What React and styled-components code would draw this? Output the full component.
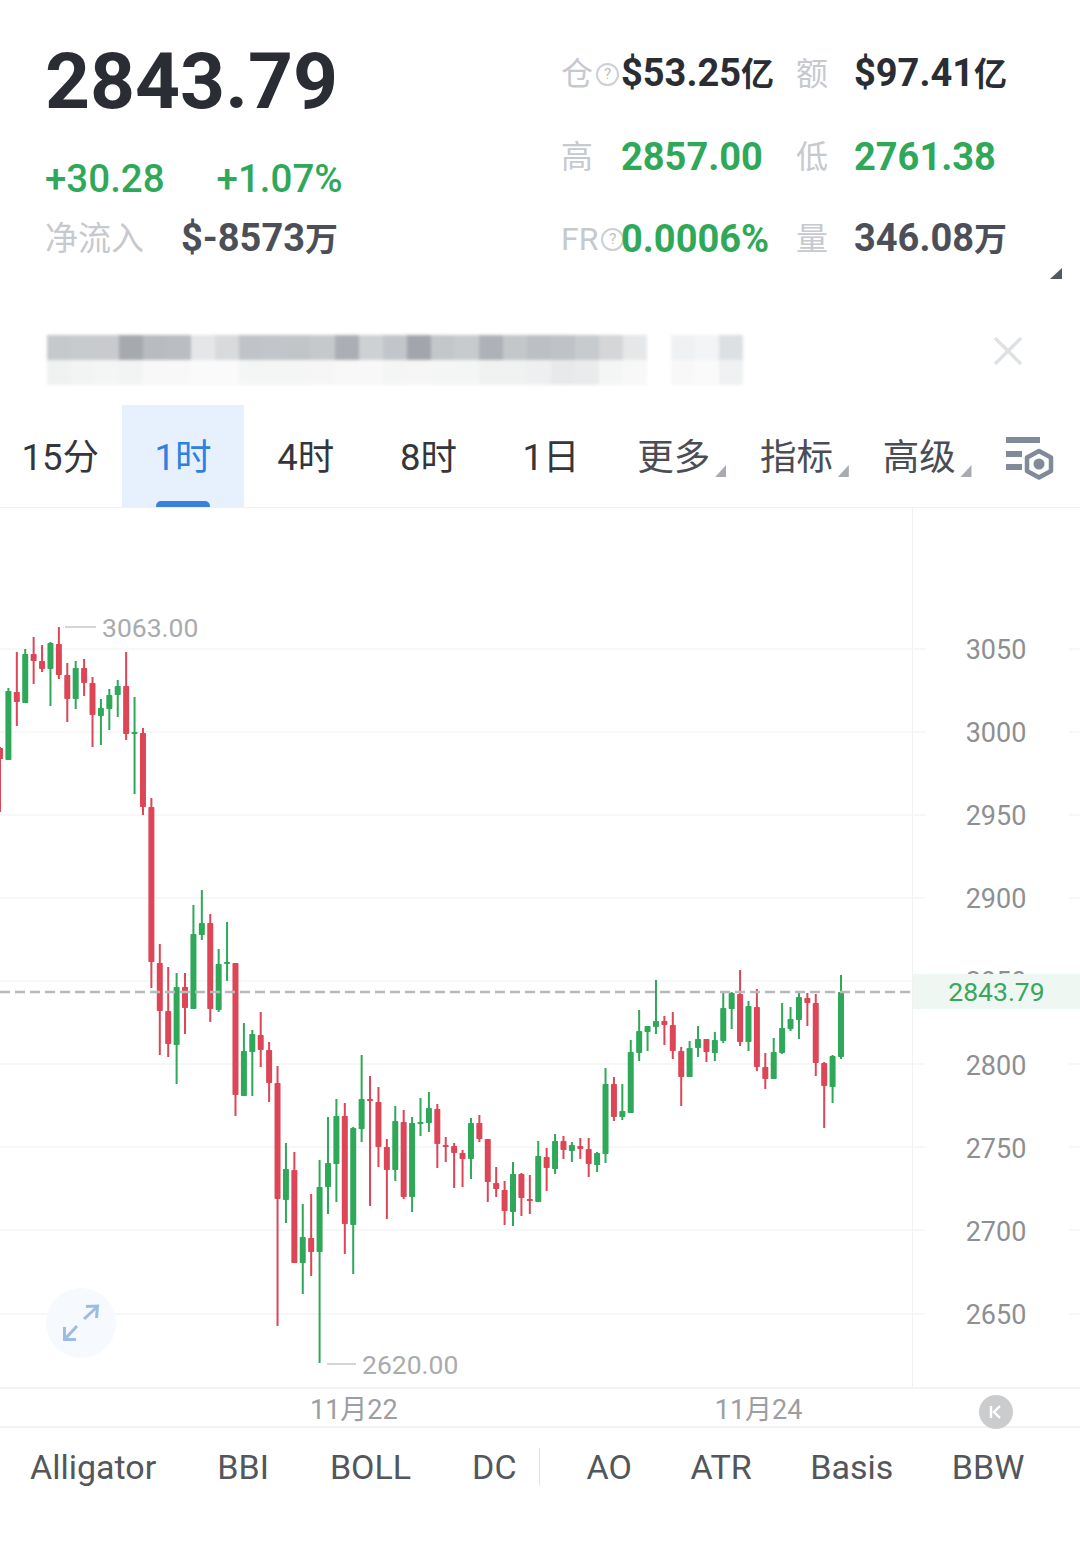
import React from "react";
import styled, { createGlobalStyle } from "styled-components";

const GlobalStyle = createGlobalStyle`
    html, body {
        margin: 0;
        padding: 0;
        background: white;
    }
    * {
        box-sizing: border-box;
    }
`;

const green = "#2fa85a";
const red = "#dc4657";
const stack = `Roboto, "Noto Sans CJK SC", sans-serif`;

const Page = styled.div`
    position: relative;
    width: 1080px;
    height: 1561px;
    overflow: hidden;
    background: white;
    font-family: ${stack};
`;

/* header */
const Header = styled.div`
    position: relative;
    display: flex;
    height: 300px;
`;

const LeftCol = styled.div`
    flex: 0 0 562px;
    padding: 41px 0 0 45px;
`;

const Price = styled.div`
    font-size: 78.5px;
    line-height: 80px;
    font-weight: 700;
    color: #2a2d33;
`;

const ChangeRow = styled.div`
    display: flex;
    gap: 52px;
    margin-top: 38px;
    font-size: 38.5px;
    line-height: 40px;
    font-weight: 500;
    color: ${green};
`;

const FlowRow = styled.div`
    display: flex;
    align-items: center;
    gap: 37px;
    margin-top: 20px;
    height: 40px;
`;

const FlowLabel = styled.span`
    font-size: 33px;
    line-height: 40px;
    color: #c6c9cd;
`;

const StatGrid = styled.div`
    display: grid;
    grid-template-columns: 59px 176px 57px auto;
    grid-auto-rows: 82.5px;
    padding-top: 33px;
    align-items: center;
`;

const StatLabel = styled.span`
    display: flex;
    align-items: center;
    margin-left: -1px;
    white-space: nowrap;
    font-size: 32px;
    line-height: 40px;
    color: #c6c9cd;
`;

const StatValue = styled.span`
    white-space: nowrap;
    font-size: 38px;
    line-height: 40px;
    font-weight: 700;
    color: ${(p) => p.$color || "#2a2d33"};
`;

const Unit = styled.span`
    font-size: 33px;
`;

const Help = styled.span`
    flex: none;
    display: inline-flex;
    align-items: center;
    justify-content: center;
    width: 23px;
    height: 23px;
    margin-left: 3px;
    border: 2px solid #ccd0d4;
    border-radius: 50%;
    font-size: 15px;
    line-height: 15px;
    color: #bcc0c5;
`;

const CornerMark = styled.div`
    position: absolute;
    right: 18px;
    top: 268px;
    width: 12px;
    height: 11px;
    background: #555a60;
    clip-path: polygon(100% 0, 100% 100%, 0 100%);
`;

/* blurred notice */
const Notice = styled.div`
    display: flex;
    height: 105px;
    padding: 35px 57px 20px 47px;
`;

const BlurStrip = styled.div`
    display: flex;
    flex-direction: column;
    filter: blur(1.5px);
`;

const BlurRow = styled.div`
    display: flex;
    height: 25px;
`;

const BlurCell = styled.div`
    width: 24px;
    height: 25px;
    background: ${(p) => p.$shade};
`;

const CloseIcon = styled.svg`
    margin-left: auto;
    margin-top: 1px;
    width: 30px;
    height: 30px;
`;

/* time frame tabs */
const Tabs = styled.div`
    display: flex;
    height: 103px;
    margin-left: -1px;
    border-bottom: 1px solid #f0f1f3;
`;

const Tab = styled.div`
    position: relative;
    flex: 0 0 122.7px;
    display: flex;
    align-items: center;
    justify-content: center;
    padding-top: 4px;
    font-size: 36.5px;
    line-height: 44px;
    color: ${(p) => (p.$active ? "#2f80e0" : p.$menu ? "#4a4e54" : "#33363b")};
    background: ${(p) => (p.$active ? "#e6f1fd" : "transparent")};
`;

const ActiveBar = styled.div`
    position: absolute;
    left: 34px;
    bottom: 0;
    width: 54px;
    height: 6px;
    border-radius: 5px 5px 0 0;
    background: #3a80e0;
`;

const Caret = styled.div`
    position: absolute;
    right: 9px;
    top: 60px;
    width: 11px;
    height: 12px;
    background: #a8abaf;
    clip-path: polygon(100% 0, 100% 100%, 0 100%);
`;

const SettingsIcon = styled.svg`
    flex: none;
    margin: 31px 0 0 23px;
    width: 52px;
    height: 44px;
`;

/* chart */
const Chart = styled.div`
    display: flex;
    height: 881px;
    border-bottom: 2px solid #f2f3f4;
`;

const Plot = styled.div`
    position: relative;
    flex: 0 0 913px;
    border-right: 1px solid #f0f1f3;
`;

const PlotSvg = styled.svg`
    position: absolute;
    left: 0;
    top: 0;
    overflow: visible;
`;

const PriceNote = styled.div`
    position: absolute;
    left: ${(p) => p.$x}px;
    top: ${(p) => p.$y}px;
    display: flex;
    align-items: center;
    gap: 6px;
    height: 32px;
    font-size: 26.5px;
    color: #a9abad;
`;

const NoteDash = styled.span`
    width: ${(p) => p.$w}px;
    height: 2px;
    background: #d4d5d6;
`;

const ExpandButton = styled.div`
    position: absolute;
    left: 46px;
    top: 780px;
    display: flex;
    align-items: center;
    justify-content: center;
    width: 70px;
    height: 70px;
    border-radius: 50%;
    background: #f6f9fd;
`;

const PriceAxis = styled.div`
    position: relative;
    flex: 1;
    padding-top: 100.5px;
`;

const AxisLabel = styled.div`
    display: flex;
    align-items: center;
    justify-content: center;
    height: 83.1px;
    padding-right: 1px;
    font-size: 27px;
    color: #8d8f92;
`;

const LastPrice = styled.div`
    position: absolute;
    left: 0;
    right: 0;
    top: 466px;
    display: flex;
    align-items: center;
    justify-content: center;
    height: 35px;
    font-size: 26.5px;
    color: #3ba55d;
    background: #eef7f1;
`;

const TimeAxis = styled.div`
    position: relative;
    display: flex;
    height: 39px;
    padding-left: 310px;
    gap: 317px;
    align-items: center;
    border-bottom: 2px solid #f2f3f4;
    font-size: 27px;
    color: #9c9ea1;
`;

const BackButton = styled.div`
    position: absolute;
    left: 979px;
    top: 6px;
    display: flex;
    align-items: center;
    justify-content: center;
    width: 34px;
    height: 34px;
    border-radius: 50%;
    background: #cbcccd;
`;

/* indicator strip */
const Indicators = styled.div`
    display: flex;
    align-items: center;
    height: 78px;
    padding-left: 30px;
    font-size: 34px;
    color: #53565b;
`;

const IndicatorGroup = styled.div`
    display: flex;
    gap: ${(p) => p.$gap}px;
`;

const Divider = styled.span`
    width: 1px;
    height: 38px;
    margin: 0 47px 0 22px;
    background: #e4e5e7;
`;

const statRows = [
    [<>仓<Help>?</Help></>, <>$53.25<Unit>亿</Unit></>, "#2a2d33", "额", <>$97.41<Unit>亿</Unit></>, "#2a2d33"],
    ["高", "2857.00", green, "低", "2761.38", green],
    [<>FR<Help>?</Help></>, "0.0006%", green, "量", <>346.08<Unit>万</Unit></>, "#4c4f57"],
];

const blurTop = ["#c6c9cc", "#c8cbce", "#c8cacd", "#a6a9ae", "#b8bbc0", "#babdc1", "#e4e6e7", "#d8dadc", "#c0c3c7", "#c2c5c9", "#c2c5c8", "#c6c9cc", "#abaeb4", "#ced1d4", "#c2c5c9", "#a2a5ac", "#c4c7ca", "#c8cbce", "#aeb1b7", "#c4c7ca", "#bcbfc3", "#bfc2c6", "#c8cbcd", "#d4d6d8", "#e6e7e8", "#ffffff", "#f0f1f2", "#f3f4f5", "#dde0e3"];
const blurBottom = ["#f0f1f1", "#f2f3f3", "#f4f5f5", "#f2f3f3", "#f8f8f8", "#f8f8f8", "#fafafa", "#fafafa", "#f4f5f5", "#f4f5f5", "#f4f5f5", "#f6f6f7", "#f8f8f8", "#f8f8f8", "#f4f5f5", "#f6f6f7", "#f4f5f5", "#f4f5f5", "#f0f1f1", "#f0f1f1", "#eeeff0", "#e8e9ea", "#eaebec", "#f4f5f5", "#f8f8f8", "#ffffff", "#f8f8f8", "#fafafa", "#f0f1f2"];

const tabs = ["15分", "1时", "4时", "8时", "1日", "更多", "指标", "高级"];
const axisPrices = [3050, 3000, 2950, 2900, 2850, 2800, 2750, 2700, 2650];
const indicatorsLeft = ["Alligator", "BBI", "BOLL", "DC"];
const indicatorsRight = ["AO", "ATR", "Basis", "BBW"];

const gridY = [649, 732, 815, 898, 981, 1064, 1147, 1230, 1314];

// g/r, wick top, body top, body bottom, wick bottom, in page pixels
const candles = [
    ["r", 747, 748, 759, 812], ["g", 688, 691, 760, 760], ["r", 652, 692, 702, 726], ["g", 649, 654, 703, 703],
    ["r", 637, 654, 661, 684], ["r", 645, 661, 669, 672], ["g", 642, 643, 669, 706], ["r", 627, 644, 675, 679],
    ["r", 663, 675, 699, 722], ["g", 661, 668, 699, 709], ["r", 659, 668, 683, 696], ["r", 677, 683, 715, 747],
    ["g", 699, 708, 716, 745], ["g", 689, 695, 709, 730], ["g", 680, 686, 695, 717], ["r", 652, 686, 734, 740],
    ["g", 697, 732, 734, 794], ["r", 728, 733, 807, 815], ["r", 798, 807, 962, 988], ["r", 944, 963, 1011, 1055],
    ["r", 967, 1011, 1044, 1057], ["g", 973, 987, 1045, 1084], ["r", 973, 987, 1008, 1034], ["g", 905, 934, 1009, 1009],
    ["g", 890, 923, 935, 940], ["r", 914, 923, 1009, 1022], ["g", 949, 964, 1010, 1012], ["g", 922, 962, 963, 981],
    ["r", 963, 963, 1095, 1116], ["g", 1023, 1051, 1096, 1096], ["g", 1030, 1034, 1052, 1096], ["r", 1012, 1035, 1050, 1067],
    ["r", 1042, 1050, 1083, 1102], ["r", 1066, 1083, 1199, 1326], ["g", 1143, 1169, 1200, 1223], ["r", 1152, 1170, 1263, 1263],
    ["g", 1204, 1237, 1263, 1294], ["r", 1194, 1238, 1252, 1276], ["g", 1160, 1187, 1252, 1363], ["g", 1117, 1163, 1187, 1214],
    ["g", 1099, 1116, 1164, 1202], ["r", 1103, 1116, 1224, 1254], ["g", 1127, 1128, 1225, 1274], ["g", 1055, 1099, 1129, 1142],
    ["r", 1076, 1099, 1101, 1206], ["r", 1087, 1102, 1147, 1167], ["r", 1139, 1147, 1170, 1219], ["g", 1106, 1121, 1170, 1181],
    ["r", 1110, 1122, 1197, 1199], ["g", 1117, 1123, 1197, 1212], ["g", 1098, 1122, 1123, 1136], ["g", 1092, 1108, 1123, 1132],
    ["r", 1104, 1109, 1144, 1168], ["r", 1137, 1145, 1146, 1162], ["r", 1143, 1146, 1153, 1188], ["r", 1150, 1153, 1159, 1187],
    ["g", 1118, 1123, 1159, 1179], ["r", 1115, 1123, 1139, 1142], ["r", 1139, 1139, 1182, 1202], ["r", 1167, 1183, 1189, 1197],
    ["r", 1181, 1190, 1211, 1225], ["g", 1162, 1174, 1212, 1226], ["r", 1173, 1174, 1198, 1216], ["r", 1175, 1199, 1201, 1214],
    ["g", 1141, 1156, 1202, 1202], ["r", 1148, 1157, 1168, 1191], ["g", 1134, 1141, 1169, 1174], ["r", 1136, 1141, 1150, 1159],
    ["g", 1142, 1145, 1151, 1162], ["r", 1138, 1146, 1149, 1159], ["r", 1138, 1149, 1164, 1177], ["g", 1152, 1153, 1165, 1172],
    ["g", 1068, 1084, 1154, 1163], ["r", 1077, 1084, 1117, 1121], ["g", 1084, 1111, 1117, 1120], ["g", 1040, 1052, 1113, 1113],
    ["g", 1010, 1031, 1053, 1061], ["g", 1026, 1026, 1032, 1051], ["g", 980, 1021, 1027, 1034], ["r", 1016, 1021, 1025, 1045],
    ["r", 1012, 1025, 1051, 1059], ["r", 1047, 1051, 1077, 1106], ["g", 1041, 1048, 1077, 1077], ["g", 1026, 1039, 1048, 1057],
    ["r", 1039, 1039, 1052, 1062], ["g", 1032, 1040, 1053, 1061], ["g", 991, 1008, 1041, 1043], ["g", 992, 993, 1009, 1029],
    ["r", 970, 994, 1042, 1046], ["g", 1001, 1006, 1042, 1051], ["r", 989, 1007, 1067, 1071], ["r", 1053, 1067, 1079, 1089],
    ["g", 1038, 1052, 1079, 1079], ["g", 1003, 1028, 1053, 1054], ["g", 1007, 1019, 1029, 1031], ["g", 993, 997, 1020, 1039],
    ["r", 993, 998, 1003, 1026], ["r", 994, 1003, 1063, 1076], ["r", 1062, 1063, 1086, 1128], ["g", 1055, 1056, 1087, 1103],
    ["g", 975, 992, 1057, 1059],
];

const candleStep = 8.41;

function Candles() {
    return candles.map(([kind, wickTop, bodyTop, bodyBottom, wickBottom], i) => {
        const x = i * candleStep;
        const color = kind === "g" ? green : red;
        return (
            <g key={i} fill={color}>
                <rect x={x - 1} y={wickTop} width="2" height={wickBottom - wickTop} />
                <rect x={x - 3} y={bodyTop} width="6" height={Math.max(bodyBottom - bodyTop, 2)} rx="0.8" />
            </g>
        );
    });
}

export default function App() {
    return (
        <Page>
            <GlobalStyle />
            <Header>
                <LeftCol>
                    <Price>2843.79</Price>
                    <ChangeRow>
                        <span>+30.28</span>
                        <span>+1.07%</span>
                    </ChangeRow>
                    <FlowRow>
                        <FlowLabel>净流入</FlowLabel>
                        <StatValue $color="#4c4f57">$-8573<Unit>万</Unit></StatValue>
                    </FlowRow>
                </LeftCol>
                <StatGrid>
                    {statRows.map((row, i) => (
                        <React.Fragment key={i}>
                            <StatLabel>{row[0]}</StatLabel>
                            <StatValue $color={row[2]}>{row[1]}</StatValue>
                            <StatLabel>{row[3]}</StatLabel>
                            <StatValue $color={row[5]}>{row[4]}</StatValue>
                        </React.Fragment>
                    ))}
                </StatGrid>
                <CornerMark />
            </Header>

            <Notice>
                <BlurStrip>
                    <BlurRow>
                        {blurTop.map((shade, i) => <BlurCell key={i} $shade={shade} />)}
                    </BlurRow>
                    <BlurRow>
                        {blurBottom.map((shade, i) => <BlurCell key={i} $shade={shade} />)}
                    </BlurRow>
                </BlurStrip>
                <CloseIcon viewBox="0 0 30 30">
                    <path d="M2 2 L28 28 M28 2 L2 28" stroke="#dfe2e5" strokeWidth="3.5" fill="none" />
                </CloseIcon>
            </Notice>

            <Tabs>
                {tabs.map((label, i) => (
                    <Tab key={label} $active={i === 1} $menu={i > 4}>
                        {label}
                        {i === 1 && <ActiveBar />}
                        {i > 4 && <Caret />}
                    </Tab>
                ))}
                <SettingsIcon viewBox="0 0 52 44">
                    <g fill="#808a99">
                        <rect x="2" y="1" width="34" height="6" />
                        <rect x="2" y="15" width="16" height="6" />
                        <rect x="2" y="28" width="16" height="6" />
                    </g>
                    <path d="M35 15 L47 21.5 L47 35 L35 41.5 L23 35 L23 21.5 Z" fill="none" stroke="#808a99" strokeWidth="4.5" strokeLinejoin="round" />
                    <circle cx="35" cy="28" r="5.5" fill="#808a99" />
                </SettingsIcon>
            </Tabs>

            <Chart>
                <Plot>
                    <PlotSvg width="912" height="880" viewBox="0 508 912 880">
                        {gridY.map((y) => (
                            <g key={y} stroke="#f3f4f5" strokeWidth="1.5">
                                <line x1="0" y1={y} x2="925" y2={y} />
                                <line x1="1069" y1={y} x2="1080" y2={y} />
                            </g>
                        ))}
                        <Candles />
                        <line x1="0" y1="992" x2="912" y2="992" stroke="#b8b9bb" strokeWidth="2.4" strokeDasharray="10 5" />
                    </PlotSvg>
                    <PriceNote $x={65} $y={103}>
                        <NoteDash $w={31} />
                        3063.00
                    </PriceNote>
                    <PriceNote $x={327} $y={840}>
                        <NoteDash $w={29} />
                        2620.00
                    </PriceNote>
                    <ExpandButton>
                        <svg width="40" height="40" viewBox="0 0 40 40" fill="none" stroke="#9dbce4" strokeWidth="3">
                            <path d="M23 16 L36 4 M25 3.5 L36.5 3 L35.5 15" />
                            <path d="M16 23 L4 36 M3.5 24 L3.5 36.5 L15 36.5" />
                        </svg>
                    </ExpandButton>
                </Plot>
                <PriceAxis>
                    {axisPrices.map((price) => <AxisLabel key={price}>{price}</AxisLabel>)}
                    <LastPrice>2843.79</LastPrice>
                </PriceAxis>
            </Chart>

            <TimeAxis>
                <span>11月22</span>
                <span>11月24</span>
                <BackButton>
                    <svg width="16" height="16" viewBox="0 0 16 16" fill="none" stroke="white" strokeWidth="2.4">
                        <path d="M3 2 L3 14 M12 2 L6 8 L12 14" />
                    </svg>
                </BackButton>
            </TimeAxis>

            <Indicators>
                <IndicatorGroup $gap={61}>
                    {indicatorsLeft.map((name) => <span key={name}>{name}</span>)}
                </IndicatorGroup>
                <Divider />
                <IndicatorGroup $gap={58.5}>
                    {indicatorsRight.map((name) => <span key={name}>{name}</span>)}
                </IndicatorGroup>
            </Indicators>
        </Page>
    );
}
